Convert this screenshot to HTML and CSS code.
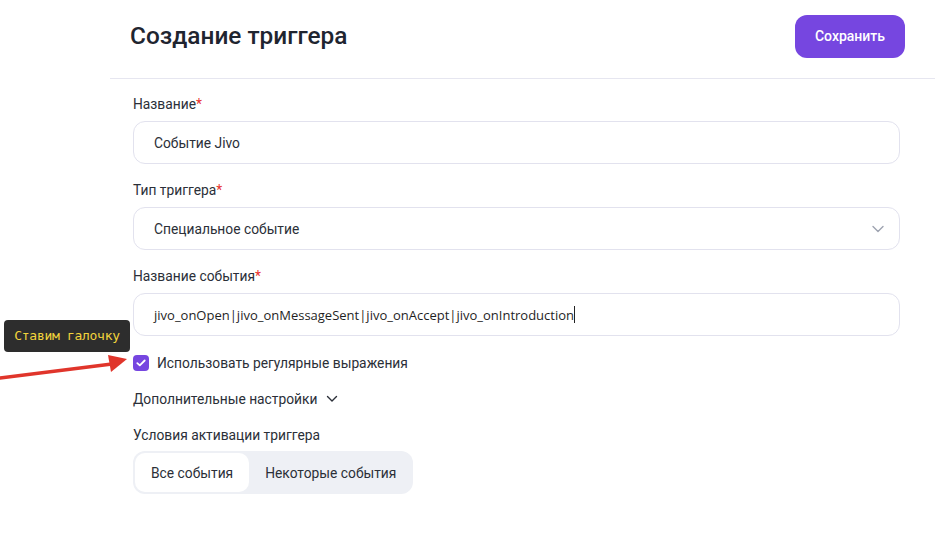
FILE: index.html
```html
<!DOCTYPE html>
<html lang="ru">
<head>
<meta charset="UTF-8">
<meta name="viewport" content="width=device-width, initial-scale=1.0">
<title>Создание триггера</title>
<link rel="stylesheet" href="styles.css">
</head>
<body>
    <div id="wrapper">
        <div id="header">
            <h1>Создание триггера</h1>
            <button class="btn-save" type="button">Сохранить</button>
        </div>

        <form class="trigger-form" name="trigger">
            <label class="field-label">Название<span class="req">*</span></label>
            <div class="input">Событие Jivo</div>

            <label class="field-label">Тип триггера<span class="req">*</span></label>
            <div class="input select">
                <span>Специальное событие</span>
                <svg class="chevron" width="14" height="14" viewBox="0 0 14 14"><path d="M2 4.5 L7 9.5 L12 4.5" fill="none" stroke="#9ea3b0" stroke-width="1.4" stroke-linecap="round" stroke-linejoin="round"/></svg>
            </div>

            <label class="field-label">Название события<span class="req">*</span></label>
            <div class="input input-code">jivo_onOpen|jivo_onMessageSent|jivo_onAccept|jivo_onIntroduction<span class="caret"></span></div>

            <div class="check-row">
                <span class="checkbox">
                    <svg width="10" height="8" viewBox="0 0 10 8"><path d="M1.3 4.1 L3.8 6.4 L8.7 1.5" fill="none" stroke="#fff" stroke-width="1.8" stroke-linecap="round" stroke-linejoin="round"/></svg>
                </span>
                <span>Использовать регулярные выражения</span>
            </div>

            <div class="more">
                <span>Дополнительные настройки</span>
                <svg width="14" height="14" viewBox="0 0 14 14"><path d="M2.5 4.5 L7 9 L11.5 4.5" fill="none" stroke="#2b2f38" stroke-width="1.4" stroke-linecap="round" stroke-linejoin="round"/></svg>
            </div>

            <label class="field-label">Условия активации триггера</label>
            <div class="segments">
                <span class="seg active">Все события</span>
                <span class="seg">Некоторые события</span>
            </div>
        </form>
    </div>

    <!-- пометка поверх формы -->
    <div class="note">Ставим галочку</div>
    <svg class="arrow" width="130" height="30" viewBox="0 0 130 30">
        <path d="M0 26 L112 12" stroke="#e0352b" stroke-width="3.5" stroke-linecap="round"/>
        <path d="M108 3 L127 7 L111 20 Z" fill="#e0352b"/>
    </svg>
</body>
</html>
```

FILE: styles.css
```css
body
{
    margin: 0;
    font-family: Roboto, "Noto Sans", sans-serif;
    font-size: 13.8px;
    color: #2b2f38;
    background: #fff;
}
#wrapper
{
    margin-left: 110px;
}
#header
{
    display: flex;
    align-items: center;
    justify-content: space-between;
    height: 78px;
    padding: 0 30px 0 20px;
    border-bottom: 1px solid #e6e6f0;
}
#header h1
{
    margin: 0 0 8px;
    font-size: 24.4px;
    font-weight: 500;
    color: #1f2530;
}
.btn-save
{
    width: 110px;
    height: 43px;
    margin-bottom: 6px;
    border: none;
    border-radius: 12px;
    background: #7646e0;
    color: #fff;
    font-family: inherit;
    font-size: 14px;
    font-weight: 500;
}
.trigger-form
{
    display: flex;
    flex-direction: column;
    align-items: flex-start;
    padding: 15px 35px 0 23px;
}
.field-label
{
    line-height: 20px;
    margin-bottom: 7px;
}
.req
{
    color: #e8322d;
}
.input
{
    box-sizing: border-box;
    display: flex;
    align-items: center;
    width: 100%;
    height: 43px;
    padding: 0 20px;
    margin-bottom: 16px;
    border: 1px solid #e2e2ee;
    border-radius: 12px;
}
.select
{
    justify-content: space-between;
    padding-right: 14px;
}
.input-code
{
    font-family: "Open Sans", sans-serif;
    font-size: 13px;
    color: #1f1f1f;
    margin-bottom: 17px;
}
.caret
{
    display: inline-block;
    width: 1px;
    height: 17px;
    background: #222;
}
.check-row
{
    display: flex;
    align-items: center;
    gap: 8px;
    line-height: 20px;
    margin-bottom: 16px;
}
.checkbox
{
    display: flex;
    align-items: center;
    justify-content: center;
    width: 16px;
    height: 16px;
    border-radius: 4px;
    background: #7646e0;
}
.more
{
    display: flex;
    align-items: center;
    gap: 8px;
    line-height: 20px;
    margin-bottom: 16px;
}
.segments
{
    display: flex;
    box-sizing: border-box;
    width: 280px;
    height: 43px;
    padding: 2px;
    margin-top: -1px;
    border-radius: 12px;
    background: #eef0f5;
    white-space: nowrap;
}
.seg
{
    display: flex;
    align-items: center;
    padding: 0 16px;
    border-radius: 10px;
}
.seg.active
{
    background: #fff;
}
.note
{
    position: absolute;
    left: 4px;
    top: 320px;
    width: 126px;
    height: 32px;
    line-height: 32px;
    text-align: center;
    border-radius: 4px;
    background: #2d2d2d;
    color: #f2d43c;
    font-family: "DejaVu Sans Mono", monospace;
    font-size: 13px;
    letter-spacing: -0.3px;
}
.arrow
{
    position: absolute;
    left: 0;
    top: 352px;
}
```
